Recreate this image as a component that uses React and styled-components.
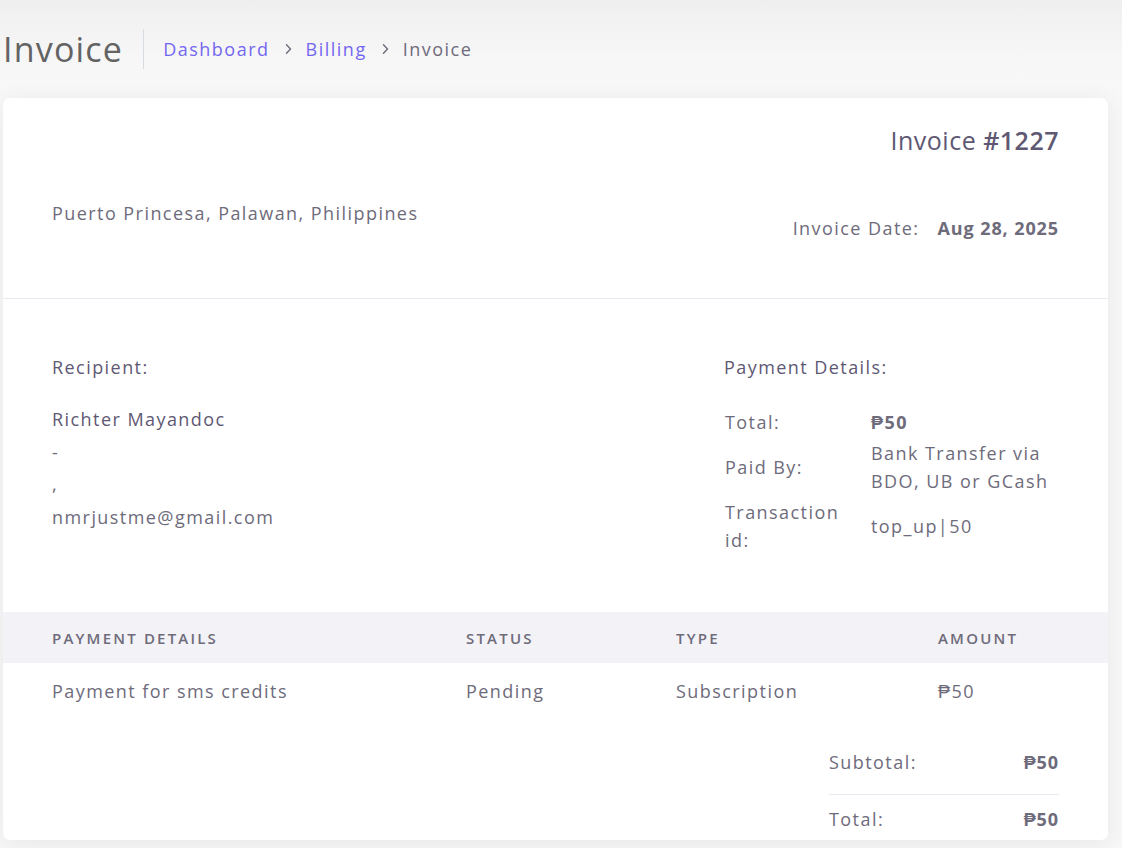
import React from 'react';
import styled, { createGlobalStyle } from 'styled-components';

const GlobalStyle = createGlobalStyle`
  html, body {
    margin: 0;
    padding: 0;
    background: #f8f8f8;
    font-family: "Open Sans", "Liberation Sans", sans-serif;
    color: #6e6b7b;
    letter-spacing: 0.09em;
  }
  * { box-sizing: border-box; }
`;

const Page = styled.div`
  min-height: 848px;
  padding: 0 14px 8px 3px;
  background: linear-gradient(180deg, #efefef 0px, #f7f7f7 60px, #f8f8f8 100px);
`;

const HeaderBar = styled.div`
  display: flex;
  align-items: center;
  height: 98px;
`;

const PageTitle = styled.h2`
  margin: 0;
  padding-right: 20px;
  font-size: 34px;
  font-weight: 400;
  letter-spacing: 1.2px;
  color: #636363;
  border-right: 1px solid #d6dce1;
  line-height: 40px;
`;

const Crumbs = styled.nav`
  display: flex;
  align-items: center;
  gap: 12px;
  padding-left: 19px;
  font-size: 18px;
  letter-spacing: 1.5px;
`;

const Crumb = styled.span`
  color: ${p => (p.active ? '#6e6b7b' : '#7367f0')};
`;

const Chevron = () => (
  <svg width="12" height="12" viewBox="0 0 12 12" fill="none" stroke="#6e6b7b" strokeWidth="1.4" strokeLinecap="round" strokeLinejoin="round">
    <polyline points="4.5 1.8 8.5 6 4.5 10.2" />
  </svg>
);

const Card = styled.div`
  background: #fff;
  border-radius: 7px;
  box-shadow: 0 4px 24px 0 rgba(34, 41, 47, 0.08);
  height: 742px;
  overflow: hidden;
  display: flex;
  flex-direction: column;
`;

const TopSection = styled.div`
  display: flex;
  justify-content: space-between;
  height: 201px;
  padding: 26px 49px 0 49px;
  border-bottom: 1px solid #ebe9f1;
`;

const Address = styled.p`
  margin: 77px 0 0 0;
  font-size: 18px;
  line-height: 24px;
`;

const InvoiceMeta = styled.div`
  display: flex;
  flex-direction: column;
  align-items: flex-end;
`;

const InvoiceTitle = styled.h4`
  margin: 0;
  font-size: 25px;
  font-weight: 400;
  line-height: 32px;
  letter-spacing: 0.5px;
  color: #5e5873;
  b { font-weight: 600; }
`;

const DateRow = styled.div`
  display: flex;
  gap: 18px;
  margin-top: 60px;
  font-size: 18px;
  line-height: 24px;
`;

const Strong = styled.span`
  font-weight: 700;
  color: #6e6b7b;
  letter-spacing: 0.05em;
`;

const InfoSection = styled.div`
  display: flex;
  justify-content: space-between;
  height: 312px;
  padding: 55px 49px 0 49px;
`;

const Column = styled.div`
  width: ${p => p.width || 'auto'};
`;

const SectionHeading = styled.h6`
  margin: 0 0 23px 0;
  font-size: 18px;
  font-weight: 500;
  line-height: 26px;
  color: #5e5873;
`;

const Line = styled.div`
  font-size: 18px;
  line-height: 32.5px;
  color: ${p => (p.dark ? '#5e5873' : '#6e6b7b')};
`;

const DetailTable = styled.div`
  display: grid;
  grid-template-columns: 146px 1fr;
  align-items: center;
  row-gap: 3px;
  padding: 5px 0 0 1px;
  font-size: 18px;
  line-height: 28px;
`;

const DetailLabel = styled.div`
  padding-right: 24px;
`;

const DetailValue = styled.div`
  font-weight: ${p => (p.bold ? 700 : 400)};
`;

const TableHead = styled.div`
  display: grid;
  grid-template-columns: 414px 210px 262px 1fr;
  align-items: center;
  height: 51px;
  margin-top: 1px;
  padding-left: 49px;
  background: #f3f2f7;
  font-size: 15px;
  font-weight: 600;
  letter-spacing: 2.2px;
  text-transform: uppercase;
  color: #6e6b7b;
`;

const TableRow = styled.div`
  display: grid;
  grid-template-columns: 414px 210px 262px 1fr;
  align-items: center;
  height: 56px;
  padding-left: 49px;
  font-size: 18px;
`;

const Totals = styled.div`
  align-self: flex-end;
  width: 230px;
  margin: 31px 49px 0 0;
`;

const TotalRow = styled.div`
  display: flex;
  justify-content: space-between;
  font-size: 18px;
  line-height: 24px;
  padding: ${p => (p.last ? '12px 0 0' : '0 0 20px')};
  border-top: ${p => (p.last ? '1px solid #ebe9f1' : 'none')};
`;

export default function App() {
  return (
    <>
      <GlobalStyle />
      <Page>
        <HeaderBar>
          <PageTitle>Invoice</PageTitle>
          <Crumbs>
            <Crumb>Dashboard</Crumb>
            <Chevron />
            <Crumb>Billing</Crumb>
            <Chevron />
            <Crumb active>Invoice</Crumb>
          </Crumbs>
        </HeaderBar>

        <Card>
          <TopSection>
            <Address>Puerto Princesa, Palawan, Philippines</Address>
            <InvoiceMeta>
              <InvoiceTitle>
                Invoice <b>#1227</b>
              </InvoiceTitle>
              <DateRow>
                <span>Invoice Date:</span>
                <Strong>Aug 28, 2025</Strong>
              </DateRow>
            </InvoiceMeta>
          </TopSection>

          <InfoSection>
            <Column>
              <SectionHeading>Recipient:</SectionHeading>
              <Line dark>Richter Mayandoc</Line>
              <Line>-</Line>
              <Line>,</Line>
              <Line>nmrjustme@gmail.com</Line>
            </Column>
            <Column width="335px">
              <SectionHeading>Payment Details:</SectionHeading>
              <DetailTable>
                <DetailLabel>Total:</DetailLabel>
                <DetailValue bold>₱50</DetailValue>
                <DetailLabel>Paid By:</DetailLabel>
                <DetailValue>Bank Transfer via BDO, UB or GCash</DetailValue>
                <DetailLabel>Transaction id:</DetailLabel>
                <DetailValue>top_up|50</DetailValue>
              </DetailTable>
            </Column>
          </InfoSection>

          <TableHead>
            <div>Payment Details</div>
            <div>Status</div>
            <div>Type</div>
            <div>Amount</div>
          </TableHead>
          <TableRow>
            <div>Payment for sms credits</div>
            <div>Pending</div>
            <div>Subscription</div>
            <div>₱50</div>
          </TableRow>

          <Totals>
            <TotalRow>
              <span>Subtotal:</span>
              <Strong>₱50</Strong>
            </TotalRow>
            <TotalRow last>
              <span>Total:</span>
              <Strong>₱50</Strong>
            </TotalRow>
          </Totals>
        </Card>
      </Page>
    </>
  );
}
